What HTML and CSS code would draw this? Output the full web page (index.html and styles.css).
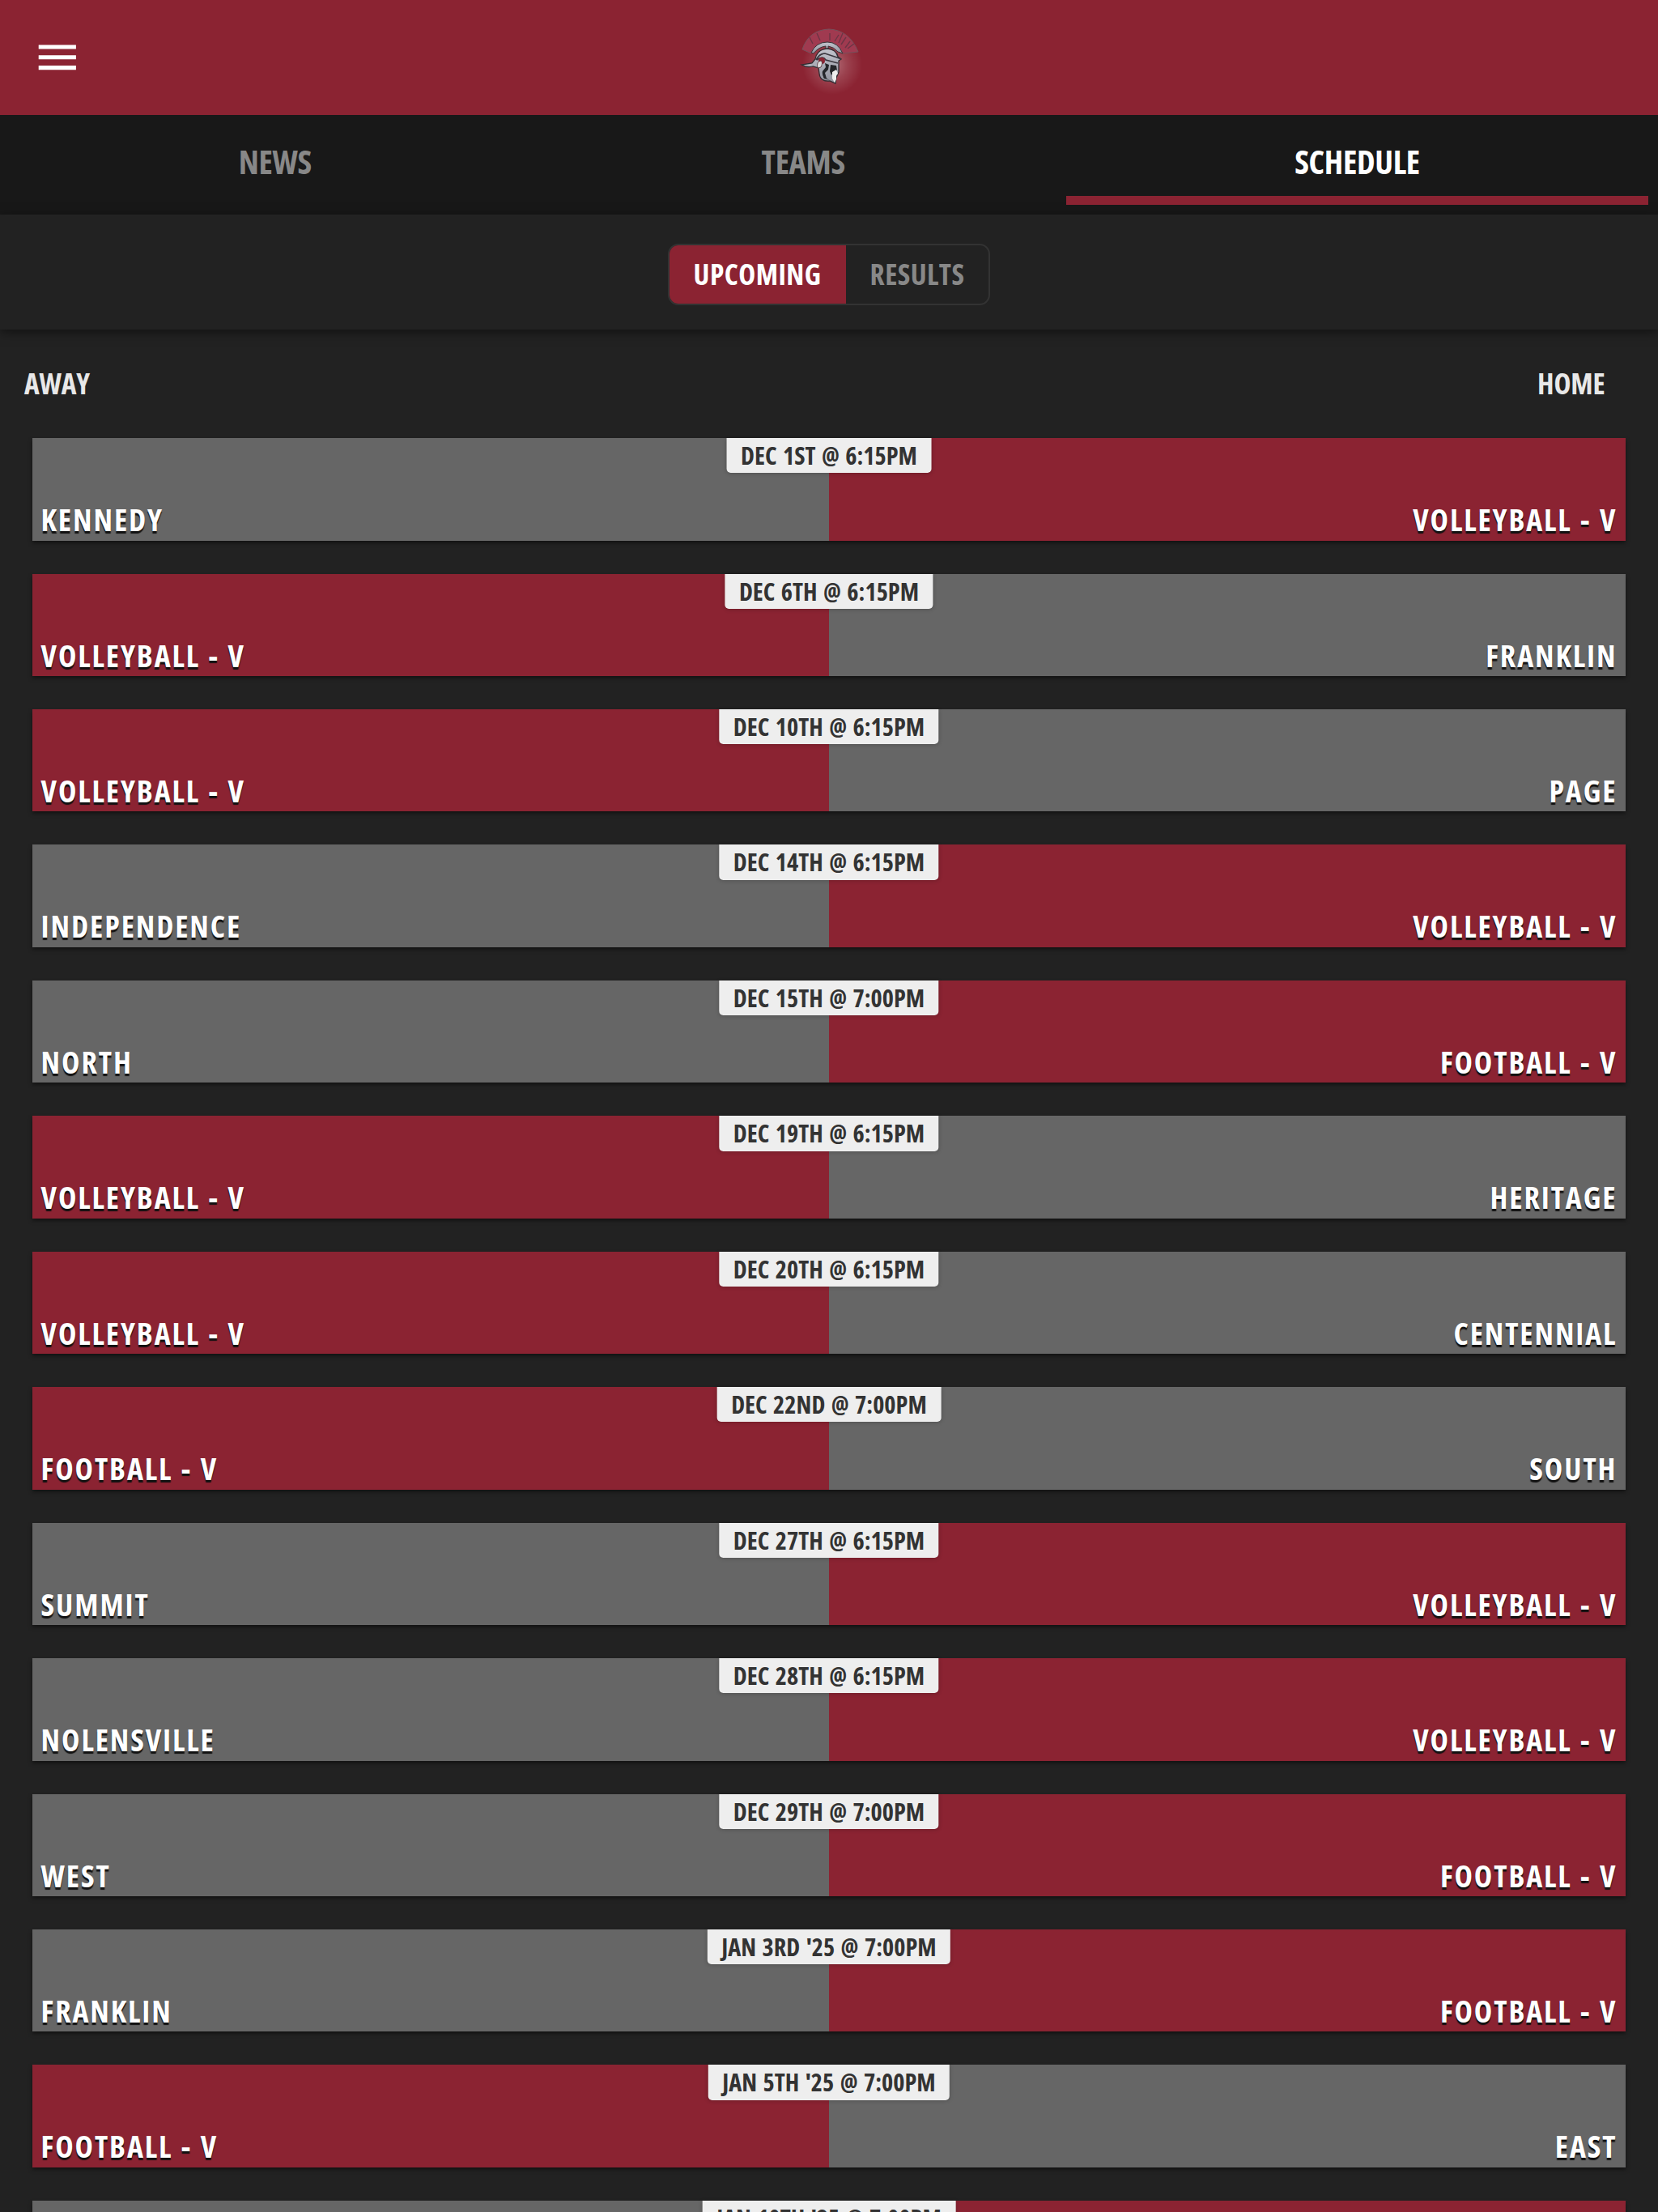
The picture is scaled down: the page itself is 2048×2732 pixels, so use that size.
FILE: index.html
```
<!DOCTYPE html>
<html lang="en">
<head>
    <meta charset="UTF-8">
    <meta name="viewport" content="width=device-width, initial-scale=1.0">
    <title>Schedule</title>
    <link rel="stylesheet" href="styles.css">
</head>
<body>
<header class="navbar">
    <svg class="menu" viewBox="0 0 24 24"><path d="M3 18h18v-2H3v2zm0-5h18v-2H3v2zm0-7v2h18V6H3z"/></svg>
    <svg class="logo" viewBox="0 1 130 120">
        <defs>
            <radialGradient id="glow">
                <stop offset="0" stop-color="#fff" stop-opacity=".34"/>
                <stop offset=".5" stop-color="#fff" stop-opacity=".14"/>
                <stop offset="1" stop-color="#fff" stop-opacity="0"/>
            </radialGradient>
            <linearGradient id="steel" x2="0" y2="1">
                <stop offset="0" stop-color="#c2c4cd"/>
                <stop offset="1" stop-color="#8f919c"/>
            </linearGradient>
        </defs>
        <circle cx="69" cy="70" r="37" fill="url(#glow)"/>
        <!-- crest -->
        <path d="M32 51Q40 27 65 26Q90 27 101 54L82 56Q76 42 63 42Q50 43 43 56Z" fill="#a03a50" stroke="#77505b" stroke-width="1"/>
        <path d="M41 36l4 8M50 31l4 9M66 31v9M77 33l-5 8M82 31l-5 12M86 36l-6 9M91 41l-6 8M96 44l-8 6" stroke="#6c3545" stroke-width="1.4" fill="none"/>
        <path d="M43 55Q49 42 63 42Q76 42 82 56L76 54Q71 48 64 47V53H61V47Q52 48 46 56Z" fill="url(#steel)" stroke="#3c3338" stroke-width="1"/>
        <!-- helmet -->
        <path d="M48 63Q50 51 63 50Q74 51 76 60L80 63L77 65V79L74 86L73 93L66 90Q54 91 53 81L52 74L45 72Q38 74 31 70L44 68Z" fill="url(#steel)" stroke="#322c31" stroke-width="1.3"/>
        <path d="M49 64Q53 56 60 56L75 61L80 63M50 64Q57 58 61 64L76 68" stroke="#3b3840" stroke-width="1.7" fill="none"/>
        <circle cx="56" cy="65" r="4" fill="#8c2433"/>
        <path d="M51 74q-2-8 4-9q3 2 0 8z" fill="#ddd" stroke="#4e2930" stroke-width=".8"/>
        <path d="M60 68l5 2-1 6-4 4 2 7 4 2-7-2q-3-5-2-9l4-5zM67 70l7 1 1 6-4 1-3 5-2-5z" fill="#24262a"/>
        <path d="M69 79l5-3 2 5-2 2v5l-2 4-3-5z" fill="#eee"/>
    </svg>
</header>

<nav class="tabs">
    <a class="tab">NEWS</a>
    <a class="tab">TEAMS</a>
    <a class="tab active">SCHEDULE</a>
</nav>

<div class="filter">
    <div class="toggle">
        <span class="option selected">UPCOMING</span>
        <span class="option">RESULTS</span>
    </div>
</div>

<div class="sides">
    <span>AWAY</span>
    <span>HOME</span>
</div>

<main class="games">
    <div class="game">
        <div class="team">KENNEDY</div>
        <div class="team us">VOLLEYBALL - V</div>
        <div class="date">DEC 1ST @ 6:15PM</div>
    </div>
    <div class="game">
        <div class="team us">VOLLEYBALL - V</div>
        <div class="team">FRANKLIN</div>
        <div class="date">DEC 6TH @ 6:15PM</div>
    </div>
    <div class="game">
        <div class="team us">VOLLEYBALL - V</div>
        <div class="team">PAGE</div>
        <div class="date">DEC 10TH @ 6:15PM</div>
    </div>
    <div class="game">
        <div class="team">INDEPENDENCE</div>
        <div class="team us">VOLLEYBALL - V</div>
        <div class="date">DEC 14TH @ 6:15PM</div>
    </div>
    <div class="game">
        <div class="team">NORTH</div>
        <div class="team us">FOOTBALL - V</div>
        <div class="date">DEC 15TH @ 7:00PM</div>
    </div>
    <div class="game">
        <div class="team us">VOLLEYBALL - V</div>
        <div class="team">HERITAGE</div>
        <div class="date">DEC 19TH @ 6:15PM</div>
    </div>
    <div class="game">
        <div class="team us">VOLLEYBALL - V</div>
        <div class="team">CENTENNIAL</div>
        <div class="date">DEC 20TH @ 6:15PM</div>
    </div>
    <div class="game">
        <div class="team us">FOOTBALL - V</div>
        <div class="team">SOUTH</div>
        <div class="date">DEC 22ND @ 7:00PM</div>
    </div>
    <div class="game">
        <div class="team">SUMMIT</div>
        <div class="team us">VOLLEYBALL - V</div>
        <div class="date">DEC 27TH @ 6:15PM</div>
    </div>
    <div class="game">
        <div class="team">NOLENSVILLE</div>
        <div class="team us">VOLLEYBALL - V</div>
        <div class="date">DEC 28TH @ 6:15PM</div>
    </div>
    <div class="game">
        <div class="team">WEST</div>
        <div class="team us">FOOTBALL - V</div>
        <div class="date">DEC 29TH @ 7:00PM</div>
    </div>
    <div class="game">
        <div class="team">FRANKLIN</div>
        <div class="team us">FOOTBALL - V</div>
        <div class="date">JAN 3RD '25 @ 7:00PM</div>
    </div>
    <div class="game">
        <div class="team us">FOOTBALL - V</div>
        <div class="team">EAST</div>
        <div class="date">JAN 5TH '25 @ 7:00PM</div>
    </div>
    <div class="game">
        <div class="team"></div>
        <div class="team us"></div>
        <div class="date">JAN 10TH '25 @ 7:00PM</div>
    </div>
</main>
</body>
</html>
```
FILE: styles.css
```
* {
    box-sizing: border-box;
}
html, body {
    margin: 0;
    height: 100%;
    overflow: hidden;
}
body {
    background: #222;
    color: #fff;
    font-family: "Open Sans", sans-serif;
    font-weight: 700;
    font-stretch: 75%;
}

/* top bar */
.navbar {
    display: grid;
    grid-template-columns: 1fr auto 1fr;
    align-items: center;
    height: 141.6px;
    padding: 0 39.6px;
    background: #8b2332;
}
.menu {
    width: 61.6px;
    height: 61.6px;
    fill: #fff;
}
.logo {
    width: 130px;
    height: 120px;
}

/* tabs */
.tabs {
    display: grid;
    grid-template-columns: 655fr 650fr 718.5fr;
    height: 123.9px;
    padding: 0 12.3px;
    background: #181818;
}
.tab {
    height: 111.7px;
    padding-top: 4.3px;
    line-height: 107.8px;
    font-size: 40.45px;
    letter-spacing: -.3px;
    text-align: center;
    color: #888;
}
.tab.active {
    color: #fff;
    box-shadow: inset 0 -11px #8b2332;
}

/* upcoming / results */
.filter {
    display: flex;
    justify-content: center;
    align-items: flex-start;
    height: 141.3px;
    padding-top: 35.5px;
    box-shadow: 0 3px 13px rgba(0, 0, 0, .5);
}
.toggle {
    display: flex;
    height: 76px;
    border: 2.5px solid #333;
    border-radius: 13px;
    overflow: hidden;
}
.option {
    padding: 0 30px;
    line-height: 70px;
    font-size: 35.4px;
    letter-spacing: .45px;
    color: #888;
}
.option.selected {
    background: #8b2332;
    color: #fff;
}

.sides {
    display: flex;
    justify-content: space-between;
    height: 134.4px;
    padding: 0 65.5px 0 30px;
    line-height: 133px;
    font-size: 35.4px;
    letter-spacing: -.1px;
    color: #e8e8e8;
}

/* games list */
.games {
    display: flex;
    flex-direction: column;
    gap: 41.05px;
    padding: 0 40px;
}
.game {
    position: relative;
    display: grid;
    grid-template-columns: 1fr 1fr;
    flex: none;
    height: 126.4px;
    box-shadow: 0 2.5px 5px rgba(0, 0, 0, .5);
}
.team {
    display: flex;
    align-items: flex-end;
    padding: 0 10.6px;
    background: #666;
    line-height: 51.4px;
    font-size: 37.9px;
    letter-spacing: 1.9px;
    word-spacing: 1.8px;
    text-shadow: 0 2.5px 1px #111;
}
.team.us {
    background: #8b2332;
}
.team:nth-child(2) {
    justify-content: flex-end;
}
.date {
    position: absolute;
    top: 0;
    left: 50%;
    transform: translateX(-50%);
    padding: 0 17.5px;
    background: #eee;
    border-radius: 0 0 5px 5px;
    box-shadow: 0 1px 5px rgba(0, 0, 0, .2);
    color: #333;
    font-size: 30.3px;
    line-height: 43.2px;
    word-spacing: 2px;
    white-space: nowrap;
}
```
